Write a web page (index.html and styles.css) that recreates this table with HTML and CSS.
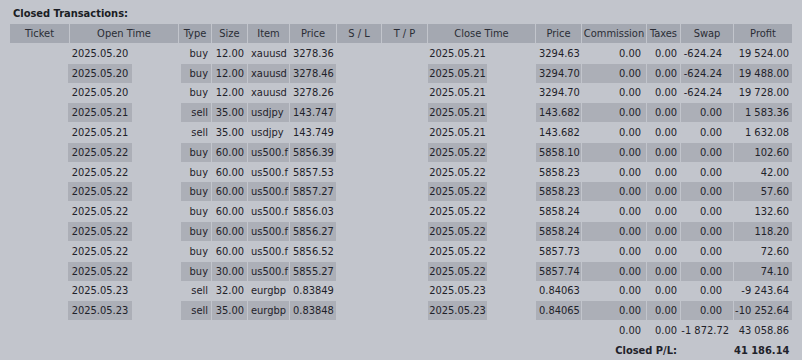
FILE: index.html
```html
<!DOCTYPE html>
<html lang="en">
<head>
<meta charset="utf-8">
<title>Closed Transactions</title>
<link rel="stylesheet" href="styles.css">
</head>
<body>
<div class="wrap">
  <div class="title">Closed Transactions:</div>
  <div class="table">
    <div class="row head">
      <div>Ticket</div><div>Open Time</div><div>Type</div><div>Size</div><div>Item</div><div>Price</div><div>S / L</div><div>T / P</div><div>Close Time</div><div>Price</div><div>Commission</div><div>Taxes</div><div>Swap</div><div>Profit</div>
    </div>

    <div class="row data">
      <div></div><div class="d">2025.05.20</div><div></div><div class="r">buy</div><div class="r">12.00</div><div class="l">xauusd</div><div class="l">3278.36</div><div></div><div></div><div class="d">2025.05.21</div><div></div><div class="l">3294.63</div><div class="r cm">0.00</div><div class="r">0.00</div><div class="r sw">-624.24</div><div class="r">19 524.00</div>
    </div>
    <div class="row data alt">
      <div></div><div class="d">2025.05.20</div><div></div><div class="r">buy</div><div class="r">12.00</div><div class="l">xauusd</div><div class="l">3278.46</div><div></div><div></div><div class="d">2025.05.21</div><div></div><div class="l">3294.70</div><div class="r cm">0.00</div><div class="r">0.00</div><div class="r sw">-624.24</div><div class="r">19 488.00</div>
    </div>
    <div class="row data">
      <div></div><div class="d">2025.05.20</div><div></div><div class="r">buy</div><div class="r">12.00</div><div class="l">xauusd</div><div class="l">3278.26</div><div></div><div></div><div class="d">2025.05.21</div><div></div><div class="l">3294.70</div><div class="r cm">0.00</div><div class="r">0.00</div><div class="r sw">-624.24</div><div class="r">19 728.00</div>
    </div>
    <div class="row data alt">
      <div></div><div class="d">2025.05.21</div><div></div><div class="r">sell</div><div class="r">35.00</div><div class="l">usdjpy</div><div class="l">143.747</div><div></div><div></div><div class="d">2025.05.21</div><div></div><div class="l">143.682</div><div class="r cm">0.00</div><div class="r">0.00</div><div class="r sw">0.00</div><div class="r">1 583.36</div>
    </div>
    <div class="row data">
      <div></div><div class="d">2025.05.21</div><div></div><div class="r">sell</div><div class="r">35.00</div><div class="l">usdjpy</div><div class="l">143.749</div><div></div><div></div><div class="d">2025.05.21</div><div></div><div class="l">143.682</div><div class="r cm">0.00</div><div class="r">0.00</div><div class="r sw">0.00</div><div class="r">1 632.08</div>
    </div>
    <div class="row data alt">
      <div></div><div class="d">2025.05.22</div><div></div><div class="r">buy</div><div class="r">60.00</div><div class="l">us500.f</div><div class="l">5856.39</div><div></div><div></div><div class="d">2025.05.22</div><div></div><div class="l">5858.10</div><div class="r cm">0.00</div><div class="r">0.00</div><div class="r sw">0.00</div><div class="r">102.60</div>
    </div>
    <div class="row data">
      <div></div><div class="d">2025.05.22</div><div></div><div class="r">buy</div><div class="r">60.00</div><div class="l">us500.f</div><div class="l">5857.53</div><div></div><div></div><div class="d">2025.05.22</div><div></div><div class="l">5858.23</div><div class="r cm">0.00</div><div class="r">0.00</div><div class="r sw">0.00</div><div class="r">42.00</div>
    </div>
    <div class="row data alt">
      <div></div><div class="d">2025.05.22</div><div></div><div class="r">buy</div><div class="r">60.00</div><div class="l">us500.f</div><div class="l">5857.27</div><div></div><div></div><div class="d">2025.05.22</div><div></div><div class="l">5858.23</div><div class="r cm">0.00</div><div class="r">0.00</div><div class="r sw">0.00</div><div class="r">57.60</div>
    </div>
    <div class="row data">
      <div></div><div class="d">2025.05.22</div><div></div><div class="r">buy</div><div class="r">60.00</div><div class="l">us500.f</div><div class="l">5856.03</div><div></div><div></div><div class="d">2025.05.22</div><div></div><div class="l">5858.24</div><div class="r cm">0.00</div><div class="r">0.00</div><div class="r sw">0.00</div><div class="r">132.60</div>
    </div>
    <div class="row data alt">
      <div></div><div class="d">2025.05.22</div><div></div><div class="r">buy</div><div class="r">60.00</div><div class="l">us500.f</div><div class="l">5856.27</div><div></div><div></div><div class="d">2025.05.22</div><div></div><div class="l">5858.24</div><div class="r cm">0.00</div><div class="r">0.00</div><div class="r sw">0.00</div><div class="r">118.20</div>
    </div>
    <div class="row data">
      <div></div><div class="d">2025.05.22</div><div></div><div class="r">buy</div><div class="r">60.00</div><div class="l">us500.f</div><div class="l">5856.52</div><div></div><div></div><div class="d">2025.05.22</div><div></div><div class="l">5857.73</div><div class="r cm">0.00</div><div class="r">0.00</div><div class="r sw">0.00</div><div class="r">72.60</div>
    </div>
    <div class="row data alt">
      <div></div><div class="d">2025.05.22</div><div></div><div class="r">buy</div><div class="r">30.00</div><div class="l">us500.f</div><div class="l">5855.27</div><div></div><div></div><div class="d">2025.05.22</div><div></div><div class="l">5857.74</div><div class="r cm">0.00</div><div class="r">0.00</div><div class="r sw">0.00</div><div class="r">74.10</div>
    </div>
    <div class="row data">
      <div></div><div class="d">2025.05.23</div><div></div><div class="r">sell</div><div class="r">32.00</div><div class="l">eurgbp</div><div class="l">0.83849</div><div></div><div></div><div class="d">2025.05.23</div><div></div><div class="l">0.84063</div><div class="r cm">0.00</div><div class="r">0.00</div><div class="r sw">0.00</div><div class="r">-9 243.64</div>
    </div>
    <div class="row data alt">
      <div></div><div class="d">2025.05.23</div><div></div><div class="r">sell</div><div class="r">35.00</div><div class="l">eurgbp</div><div class="l">0.83848</div><div></div><div></div><div class="d">2025.05.23</div><div></div><div class="l">0.84065</div><div class="r cm">0.00</div><div class="r">0.00</div><div class="r sw">0.00</div><div class="r">-10 252.64</div>
    </div>

    <div class="row total">
      <div class="r cm">0.00</div><div class="r">0.00</div><div class="r tsw">-1 872.72</div><div class="r">43 058.86</div>
    </div>
    <div class="row pl">
      <div class="r">Closed P/L:</div><div></div><div class="r">41 186.14</div>
    </div>
  </div>
</div>
</body>
</html>
```
FILE: styles.css
```css
html, body {
  margin: 0;
  padding: 0;
  background: #c2c5cc;
}

body {
  font-family: "DejaVu Sans Condensed", "DejaVu Sans", sans-serif;
  font-stretch: condensed;
  font-size: 11px;
  color: #1f222a;
}

.wrap {
  padding: 5px 10px 0 10px;
}

.title {
  font-weight: bold;
  line-height: 18px;
  padding-left: 3px;
  margin-bottom: 1px;
  color: #1a1d24;
}

.table {
  display: flex;
  flex-direction: column;
  gap: 0.8px;
}

.row {
  display: grid;
  column-gap: 1px;
  height: 19px;
  line-height: 19px;
  white-space: nowrap;
}

.row > div {
  overflow: hidden;
}

.head {
  grid-template-columns: 59px 108px 32px 35px 41px 46px 44px 45px 107px 45px 64px 33px 52px 58px;
}

.head > div {
  background: #a4a8b1;
  text-align: center;
  color: #2a2d35;
}

.data {
  grid-template-columns: 57px 64px 47px 30px 35px 41px 46px 44px 45px 59px 47px 45px 64px 33px 52px 58px;
}

.alt > div:nth-child(2),
.alt > div:nth-child(4),
.alt > div:nth-child(5),
.alt > div:nth-child(6),
.alt > div:nth-child(7),
.alt > div:nth-child(10),
.alt > div:nth-child(12),
.alt > div:nth-child(13),
.alt > div:nth-child(14),
.alt > div:nth-child(15),
.alt > div:nth-child(16) {
  background: #acafb7;
}

.d {
  text-align: center;
}

.l {
  text-align: left;
  padding-left: 3px;
}

.r {
  text-align: right;
  padding-right: 3px;
}

.r.cm {
  padding-right: 5px;
}

.r.sw {
  padding-right: 11px;
}

.total {
  grid-template-columns: 64px 33px 52px 58px;
  justify-content: end;
}

.r.tsw {
  padding-right: 4px;
}

.pl {
  grid-template-columns: 98px 52px 58px;
  justify-content: end;
  font-weight: bold;
}
```
